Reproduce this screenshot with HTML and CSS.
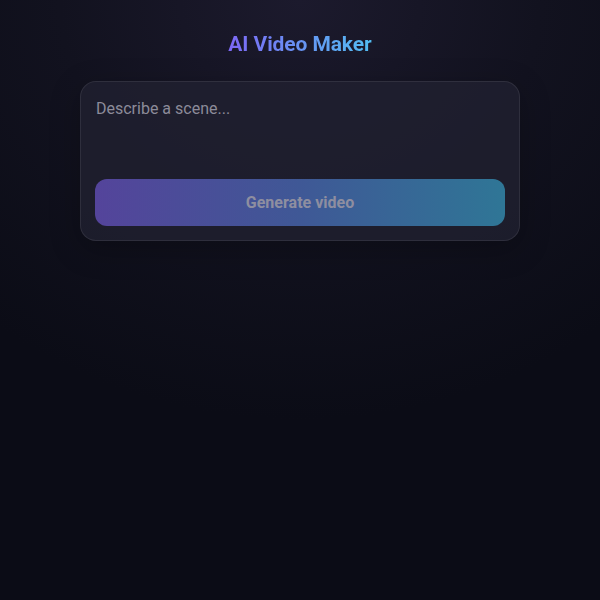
FILE: index.html
```html
<!DOCTYPE html>
<html lang="en">

<head>
    <meta charset="UTF-8">
    <meta name="viewport" content="width=device-width, initial-scale=1.0">
    <title>AI Video Maker</title>
    <link rel="stylesheet" href="styles.css">
</head>

<body>
    <main class="page">
        <h1 class="title">AI Video Maker</h1>

        <div class="card">
            <textarea class="prompt" placeholder="Describe a scene..."></textarea>
            <button class="generate-button" disabled>Generate video</button>
        </div>
    </main>
</body>

</html>
```

FILE: styles.css
```css
* {
    box-sizing: border-box;
}

html,
body {
    height: 100%;
}

body {
    margin: 0;
    font-family: Roboto, 'Liberation Sans', sans-serif;
    background-color: #0b0c16;
    background-image: radial-gradient(ellipse 80% 70% at 50% 0%, #1c1a2d 0%, #12121f 50%, #0b0c16 100%);
    color: #e6e6f0;
}

.page {
    display: flex;
    flex-direction: column;
    align-items: center;
    padding-top: 30px;
}

.title {
    margin: 0 0 23px;
    font-size: 21px;
    line-height: 28px;
    font-weight: 700;
    letter-spacing: -0.1px;
    background-image: linear-gradient(to right, #7d68f5, #52bdf2);
    -webkit-background-clip: text;
    background-clip: text;
    color: transparent;
}

.card {
    width: 440px;
    padding: 14px;
    display: flex;
    flex-direction: column;
    gap: 12px;
    background-color: rgba(34, 33, 50, 0.75);
    border: 1px solid rgba(255, 255, 255, 0.08);
    border-radius: 16px;
    box-shadow: 0 8px 30px rgba(0, 0, 0, 0.25);
}

.prompt {
    height: 71px;
    padding: 1px 1px 0;
    border: none;
    outline: none;
    resize: none;
    background: transparent;
    font-family: Roboto, 'Liberation Sans', sans-serif;
    font-size: 16px;
    line-height: 24px;
    color: #e6e6f0;
}

.prompt::placeholder {
    color: #8c8b99;
}

.generate-button {
    height: 47px;
    border: none;
    border-radius: 12px;
    background-image: linear-gradient(to right, #54449b, #3f5896 50%, #2f7696);
    font-family: Roboto, 'Liberation Sans', sans-serif;
    font-size: 16px;
    font-weight: 700;
    color: #8e8ea0;
    cursor: not-allowed;
}
```
